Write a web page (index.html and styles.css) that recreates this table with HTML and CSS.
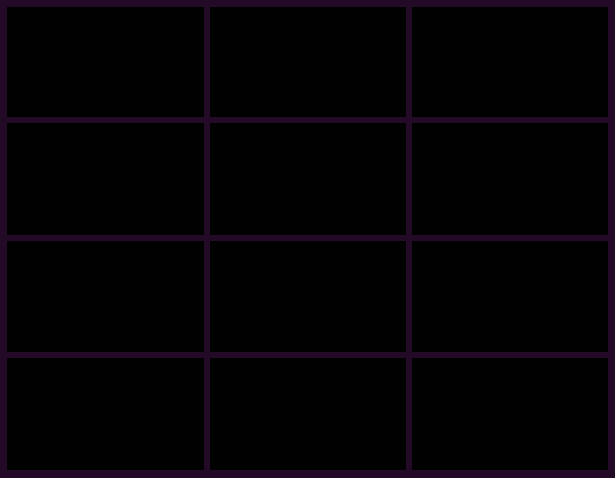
FILE: index.html
```html
<!DOCTYPE html>
<html>
<head>
<meta charset="utf-8">
<link rel="stylesheet" href="styles.css">
</head>
<body>
<div class="grid">
  <div class="cell"></div><div class="cell"></div><div class="cell"></div>
  <div class="cell"></div><div class="cell"></div><div class="cell"></div>
  <div class="cell"></div><div class="cell"></div><div class="cell"></div>
  <div class="cell"></div><div class="cell"></div><div class="cell"></div>
</div>
</body>
</html>
```

FILE: styles.css
```css
html, body {
  margin: 0;
  padding: 0;
  width: 615px;
  height: 478px;
  overflow: hidden;
  background: #230a27;
}
.grid {
  box-sizing: border-box;
  width: 615px;
  height: 478px;
  padding: 7px 6px 8px 7px;
  display: grid;
  grid-template-columns: 197px 196px 196px;
  grid-template-rows: 110px 112px 111px 112px;
  gap: 6px;
  background: #230a27;
}
.cell {
  background: #020102;
}
```
